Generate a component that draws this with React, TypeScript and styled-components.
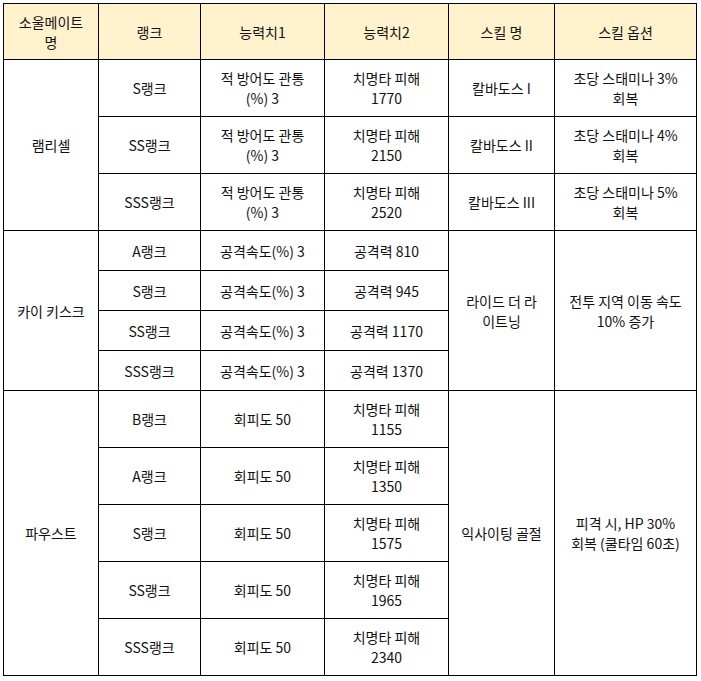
import React from "react";
import styled, { createGlobalStyle } from "styled-components";

const Global = createGlobalStyle`
  html, body { margin: 0; padding: 0; background: #fff; }
  body { font-family: "Noto Sans CJK KR", "Noto Sans", sans-serif; color: #111; }
`;

const Page = styled.div`
  padding: 3px;
`;

const Table = styled.table`
  border-collapse: collapse;
  table-layout: fixed;
  width: 694px;
  font-size: 14px;
  line-height: 20px;
  border: 1px solid #000;
`;

const Row = styled.tr<{ $h: number }>`
  height: ${(p) => p.$h}px;
`;

const Head = styled.th`
  background: #fff2cc;
  font-weight: 400;
  border: 1px solid #000;
  padding: 0 4px;
  text-align: center;
  vertical-align: middle;
`;

const Cell = styled.td`
  border: 1px solid #000;
  padding: 0 4px;
  text-align: center;
  vertical-align: middle;
`;

const widths = [95, 102, 124, 124, 106, 142];

type R = { rank: string; s1: React.ReactNode; s2: React.ReactNode; h: number };

const L = ({ a, b }: { a: string; b: string }) => (
  <>
    {a}
    <br />
    {b}
  </>
);

const groups: {
  name: string;
  skill: React.ReactNode;
  opt: React.ReactNode;
  perRowSkill?: React.ReactNode[];
  perRowOpt?: React.ReactNode[];
  rows: R[];
}[] = [
  {
    name: "램리셀",
    skill: null,
    opt: null,
    perRowSkill: ["칼바도스 I", "칼바도스 II", "칼바도스 III"],
    perRowOpt: [
      <L a="초당 스태미나 3%" b="회복" />,
      <L a="초당 스태미나 4%" b="회복" />,
      <L a="초당 스태미나 5%" b="회복" />,
    ],
    rows: [
      { rank: "S랭크", s1: <L a="적 방어도 관통" b="(%) 3" />, s2: <L a="치명타 피해" b="1770" />, h: 57 },
      { rank: "SS랭크", s1: <L a="적 방어도 관통" b="(%) 3" />, s2: <L a="치명타 피해" b="2150" />, h: 57 },
      { rank: "SSS랭크", s1: <L a="적 방어도 관통" b="(%) 3" />, s2: <L a="치명타 피해" b="2520" />, h: 57 },
    ],
  },
  {
    name: "카이 키스크",
    skill: <L a="라이드 더 라" b="이트닝" />,
    opt: <L a="전투 지역 이동 속도" b="10% 증가" />,
    rows: [
      { rank: "A랭크", s1: "공격속도(%) 3", s2: "공격력 810", h: 40 },
      { rank: "S랭크", s1: "공격속도(%) 3", s2: "공격력 945", h: 40 },
      { rank: "SS랭크", s1: "공격속도(%) 3", s2: "공격력 1170", h: 40 },
      { rank: "SSS랭크", s1: "공격속도(%) 3", s2: "공격력 1370", h: 40 },
    ],
  },
  {
    name: "파우스트",
    skill: "익사이팅 골절",
    opt: <L a="피격 시, HP 30%" b="회복 (쿨타임 60초)" />,
    rows: [
      { rank: "B랭크", s1: "회피도 50", s2: <L a="치명타 피해" b="1155" />, h: 57 },
      { rank: "A랭크", s1: "회피도 50", s2: <L a="치명타 피해" b="1350" />, h: 57 },
      { rank: "S랭크", s1: "회피도 50", s2: <L a="치명타 피해" b="1575" />, h: 57 },
      { rank: "SS랭크", s1: "회피도 50", s2: <L a="치명타 피해" b="1965" />, h: 57 },
      { rank: "SSS랭크", s1: "회피도 50", s2: <L a="치명타 피해" b="2340" />, h: 57 },
    ],
  },
];

export default function App() {
  return (
    <Page>
      <Global />
      <Table>
        <colgroup>
          {widths.map((w, i) => (
            <col key={i} style={{ width: w }} />
          ))}
        </colgroup>
        <thead>
          <Row $h={56}>
            <Head>
              소울메이트
              <br />명
            </Head>
            <Head>랭크</Head>
            <Head>능력치1</Head>
            <Head>능력치2</Head>
            <Head>스킬 명</Head>
            <Head>스킬 옵션</Head>
          </Row>
        </thead>
        <tbody>
          {groups.map((g) =>
            g.rows.map((r, i) => (
              <Row $h={r.h} key={g.name + i}>
                {i === 0 && <Cell rowSpan={g.rows.length}>{g.name}</Cell>}
                <Cell>{r.rank}</Cell>
                <Cell>{r.s1}</Cell>
                <Cell>{r.s2}</Cell>
                {g.perRowSkill ? (
                  <Cell>{g.perRowSkill[i]}</Cell>
                ) : (
                  i === 0 && <Cell rowSpan={g.rows.length}>{g.skill}</Cell>
                )}
                {g.perRowOpt ? (
                  <Cell>{g.perRowOpt[i]}</Cell>
                ) : (
                  i === 0 && <Cell rowSpan={g.rows.length}>{g.opt}</Cell>
                )}
              </Row>
            ))
          )}
        </tbody>
      </Table>
    </Page>
  );
}
